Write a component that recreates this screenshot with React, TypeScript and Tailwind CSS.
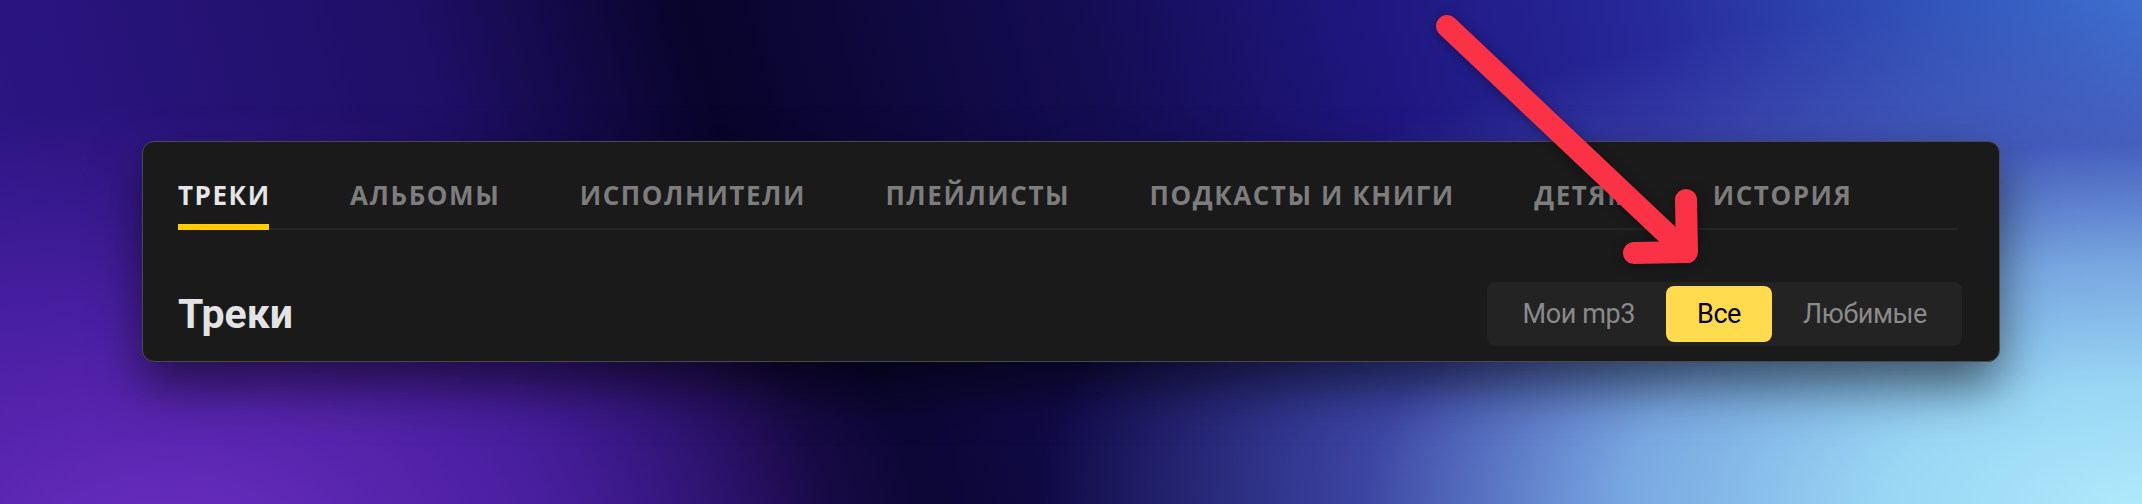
import React from 'react';

const tabs = ['Треки', 'Альбомы', 'Исполнители', 'Плейлисты', 'Подкасты и книги', 'Детям', 'История'];
const filters = ['Мои mp3', 'Все', 'Любимые'];

export default function App() {
  const activeTab = 'Треки';
  const activeFilter = 'Все';

  return (
    <div className="relative h-[504px] w-full overflow-hidden px-[142px] pt-[141px] bg-[radial-gradient(ellipse_1300px_600px_at_100%_100%,#aeeafb_0%,#98d6f4_20%,#78a6e0_40%,rgba(74,90,184,0.7)_60%,rgba(60,80,180,0)_85%),radial-gradient(ellipse_760px_440px_at_8%_108%,#6a2dbf_0%,rgba(85,35,175,0.75)_50%,rgba(80,30,160,0)_100%),linear-gradient(75deg,#2d1788_0%,#1f0f66_24%,#08042a_36%,#150d55_54%,#1f1780_66%,#27289a_78%,#3152b8_90%,#3d70d0_100%)]">
      {/* Card */}
      <div className="rounded-[12px] border border-[#4a4a4a] bg-[#1a1a1a] pl-[35px] pr-[37px] pt-[38px] pb-[15px] shadow-[0_24px_50px_rgba(0,0,0,0.55)]">
        {/* Tabs */}
        <nav className="mr-[4px] flex gap-[81px] border-b-2 border-[#262626] font-['Open_Sans',sans-serif]">
          {tabs.map((tab) => (
            <div
              key={tab}
              className={`-mb-[2px] border-b-[6px] pb-[14px] text-[26px] font-bold uppercase leading-[30px] tracking-[0.06em] whitespace-nowrap ${
                tab === activeTab ? 'border-[#ffcc00] text-[#e6e6e6]' : 'border-transparent text-[#7d7d7d]'
              }`}
            >
              <span className="-mr-[0.06em]">{tab}</span>
            </div>
          ))}
        </nav>

        {/* Title + filter */}
        <div className="mt-[52px] flex items-center justify-between">
          <h1 className="font-['Roboto',sans-serif] text-[41px] font-bold leading-[41px] text-[#e3e3e3]">Треки</h1>
          <div className="flex rounded-[8px] bg-[#232323] p-[4px] font-['Roboto',sans-serif]">
            {filters.map((f) => (
              <div
                key={f}
                className={`flex h-[56px] items-center rounded-[8px] px-[31px] text-[27px] tracking-[-0.4px] ${
                  f === activeFilter ? 'bg-[#ffdb4d] text-black' : 'text-[#8a8a8a]'
                }`}
              >
                {f}
              </div>
            ))}
          </div>
        </div>
      </div>

      {/* Annotation arrow */}
      <svg
        className="pointer-events-none absolute inset-0 z-10 h-full w-full drop-shadow-[0_2px_6px_rgba(0,0,0,0.35)]"
        viewBox="0 0 2142 504"
      >
        <g fill="none" stroke="#fb3246" strokeWidth="22" strokeLinecap="round" strokeLinejoin="round">
          <path d="M1447 26 L1684 250" />
          <path d="M1686 200 L1687 252 L1634 253" />
        </g>
      </svg>
    </div>
  );
}
